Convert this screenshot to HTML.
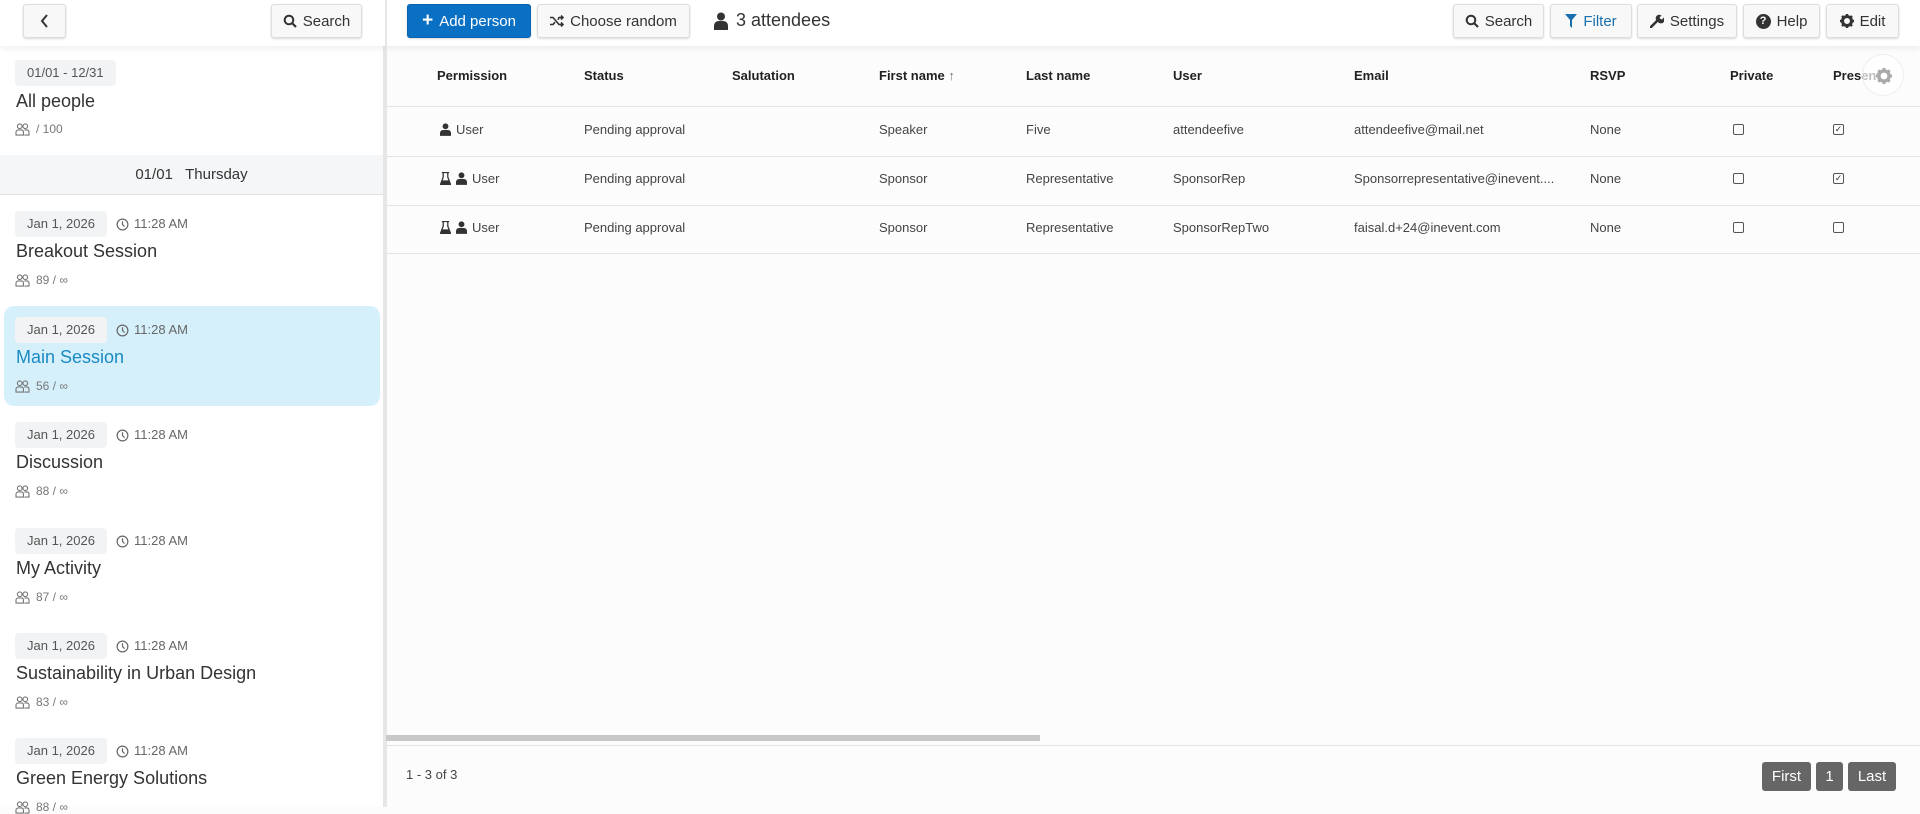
<!DOCTYPE html>
<html><head><meta charset="utf-8"><style>
*{box-sizing:border-box;margin:0;padding:0}
body{width:1920px;height:807px;overflow:hidden;background:#fcfcfc;font-family:"Liberation Sans",sans-serif;color:#333;position:relative}
.abs{position:absolute}
.btn{position:absolute;top:4px;height:34px;border:1px solid #ddd;border-radius:3px;background:#f8f8f8;box-shadow:0 1px 2px rgba(0,0,0,.15);font-size:15px;color:#333;display:flex;align-items:center;justify-content:center;gap:6px;white-space:nowrap}
.side{position:absolute;left:0;top:0;width:385px;height:807px;background:#fff;border-right:2px solid #e6e6e6}
.topbar{position:absolute;left:0;top:0;width:1920px;height:46px;background:#fff;box-shadow:0 3px 6px rgba(0,0,0,.06)}
.badge{position:absolute;left:15px;height:26px;padding:0 12px;background:#f1f3f4;border-radius:4px;font-size:13px;color:#555;line-height:26px}
.time{position:absolute;left:116px;font-size:13px;color:#666;line-height:26px;display:flex;align-items:center;gap:5px}
.title{position:absolute;left:16px;font-size:18px;color:#333}
.cnt{position:absolute;left:15px;font-size:12px;color:#777;display:flex;align-items:center;gap:6px}
.th{position:absolute;top:68px;font-size:13px;font-weight:bold;color:#222}
.td{position:absolute;font-size:13px;color:#444;display:flex;align-items:center;gap:5px}
.hl{position:absolute;left:386px;width:1534px;height:1px;background:#e3e3e3}
.cb{position:absolute;width:11px;height:11px;border:1px solid #555;border-radius:2px;font-size:9px;line-height:9px;text-align:center}
.pg{position:absolute;top:762px;height:29px;background:#666;color:#fff;border-radius:3px;font-size:15px;display:flex;align-items:center;justify-content:center}
</style></head><body>
<svg width="0" height="0" style="position:absolute">
<defs>
<symbol id="ppl" viewBox="0 0 16 14"><g fill="none" stroke="#777" stroke-width="1.2"><circle cx="5" cy="3.5" r="2.5"/><circle cx="11" cy="3.5" r="2.5"/><path d="M1 13v-3c0-1.5 1-2.5 2.5-2.5h3C8 7.5 9 8.5 9 10v3zM10 7.5h2.5c1.5 0 2.5 1 2.5 2.5v3h-5"/></g></symbol>
<symbol id="clk" viewBox="0 0 14 14"><g fill="none" stroke="#666" stroke-width="1.3"><circle cx="7" cy="7" r="5.8"/><path d="M7 3.5V7l2.2 2.2"/></g></symbol>
<symbol id="usr" viewBox="0 0 12 14"><circle cx="6" cy="3.5" r="3.2" fill="#333"/><path d="M0 14v-3c0-2 1.5-3.5 3.5-3.5h5C10.5 7.5 12 9 12 11v3z" fill="#333"/></symbol>
<symbol id="flk" viewBox="0 0 12 14"><path d="M2 0.5h8M3.5 0.5v5L0.5 13.5h11L8.5 5.5v-5" fill="none" stroke="#333" stroke-width="1.4"/><path d="M2 9h8l1.5 4.5h-11z" fill="#333"/></symbol>
</defs></svg>
<div class="side">
  <div class="badge" style="top:60px">01/01 - 12/31</div>
  <div class="title" style="top:91px">All people</div>
  <div class="cnt" style="top:122px"><svg width="15" height="13"><use href="#ppl"/></svg> / 100</div>
  <div class="abs" style="left:0;top:155px;width:383px;height:40px;background:#f5f6f7;border-bottom:1px solid #e2e2e2;text-align:center;line-height:40px;font-size:15px;color:#333">01/01&nbsp;&nbsp; Thursday</div>
  <div class="abs" style="left:4px;top:306px;width:376px;height:100px;background:#d5f0fb;border-radius:10px"></div>
  <div class="badge" style="top:211px">Jan 1, 2026</div><div class="time" style="top:211px"><svg width="13" height="13"><use href="#clk"/></svg>11:28 AM</div>
  <div class="title" style="top:241px">Breakout Session</div><div class="cnt" style="top:273px"><svg width="15" height="13"><use href="#ppl"/></svg>89 / ∞</div>
  <div class="badge" style="top:317px">Jan 1, 2026</div><div class="time" style="top:317px"><svg width="13" height="13"><use href="#clk"/></svg>11:28 AM</div>
  <div class="title" style="top:347px;color:#1a8ac4">Main Session</div><div class="cnt" style="top:379px"><svg width="15" height="13"><use href="#ppl"/></svg>56 / ∞</div>
  <div class="badge" style="top:422px">Jan 1, 2026</div><div class="time" style="top:422px"><svg width="13" height="13"><use href="#clk"/></svg>11:28 AM</div>
  <div class="title" style="top:452px">Discussion</div><div class="cnt" style="top:484px"><svg width="15" height="13"><use href="#ppl"/></svg>88 / ∞</div>
  <div class="badge" style="top:528px">Jan 1, 2026</div><div class="time" style="top:528px"><svg width="13" height="13"><use href="#clk"/></svg>11:28 AM</div>
  <div class="title" style="top:558px">My Activity</div><div class="cnt" style="top:590px"><svg width="15" height="13"><use href="#ppl"/></svg>87 / ∞</div>
  <div class="badge" style="top:633px">Jan 1, 2026</div><div class="time" style="top:633px"><svg width="13" height="13"><use href="#clk"/></svg>11:28 AM</div>
  <div class="title" style="top:663px">Sustainability in Urban Design</div><div class="cnt" style="top:695px"><svg width="15" height="13"><use href="#ppl"/></svg>83 / ∞</div>
  <div class="badge" style="top:738px">Jan 1, 2026</div><div class="time" style="top:738px"><svg width="13" height="13"><use href="#clk"/></svg>11:28 AM</div>
  <div class="title" style="top:768px">Green Energy Solutions</div><div class="cnt" style="top:800px"><svg width="15" height="13"><use href="#ppl"/></svg>88 / ∞</div>
</div>
<div class="topbar"></div>
<div class="abs" style="left:385px;top:0;width:2px;height:807px;background:#e6e6e6"></div>
<div class="btn" style="left:23px;width:43px"><svg width="10" height="14" viewBox="0 0 10 14"><path d="M7 1L2 7l5 6" fill="none" stroke="#333" stroke-width="2"/></svg></div>
<div class="btn" style="left:271px;width:91px"><svg width="14" height="14" viewBox="0 0 14 14"><circle cx="6" cy="6" r="4.3" fill="none" stroke="#333" stroke-width="2"/><path d="M9 9l4 4" stroke="#333" stroke-width="2.2"/></svg>Search</div>
<div class="btn" style="left:407px;width:124px;background:#0a70c4;border-color:#0a63ae;color:#fff"><b style="font-size:19px">+</b>Add person</div>
<div class="btn" style="left:537px;width:153px"><svg width="14" height="12" viewBox="0 0 14 12"><path d="M0 2.5h3l6 7h4M0 9.5h3l2-2.3M8 4.8l1-2.3h4M11 0.5l2 2-2 2M11 7.5l2 2-2 2" fill="none" stroke="#333" stroke-width="1.6"/></svg>Choose random</div>
<div class="abs" style="left:714px;top:10px;font-size:18px;color:#333;display:flex;align-items:center;gap:8px"><svg width="14" height="18" viewBox="0 0 14 18"><circle cx="7" cy="4.5" r="4" fill="#333"/><path d="M0 18v-4c0-3 2-5 5-5h4c3 0 5 2 5 5v4z" fill="#333"/></svg>3 attendees</div>
<div class="btn" style="left:1453px;width:91px"><svg width="14" height="14" viewBox="0 0 14 14"><circle cx="6" cy="6" r="4.3" fill="none" stroke="#333" stroke-width="2"/><path d="M9 9l4 4" stroke="#333" stroke-width="2.2"/></svg>Search</div>
<div class="btn" style="left:1550px;width:82px;color:#1a6fae"><svg width="12" height="14" viewBox="0 0 12 14"><path d="M0 0h12L7 6v8L5 12V6z" fill="#1a6fae"/></svg>Filter</div>
<div class="btn" style="left:1637px;width:100px"><svg width="14" height="14" viewBox="0 0 14 14"><path d="M1 13l6-6" stroke="#333" stroke-width="2.6" stroke-linecap="round"/><path d="M7 7a3.5 3.5 0 0 1 4.5-5.5L9.5 3.5l1 1.5 1.5 0.5 1.8-2A3.5 3.5 0 0 1 8 8z" fill="#333"/></svg>Settings</div>
<div class="btn" style="left:1743px;width:77px"><span style="display:inline-block;width:15px;height:15px;border-radius:50%;background:#333;color:#fff;font-size:11px;font-weight:bold;line-height:15px;text-align:center">?</span>Help</div>
<div class="btn" style="left:1826px;width:73px"><svg width="14" height="14" viewBox="0 0 14 14"><circle cx="7" cy="7" r="4.5" fill="none" stroke="#333" stroke-width="3"/><path d="M7 0v3M7 11v3M0 7h3M11 7h3M2 2l2 2M10 10l2 2M2 12l2-2M10 4l2-2" stroke="#333" stroke-width="2.4"/></svg>Edit</div>

<div class="th" style="left:437px">Permission</div>
<div class="th" style="left:584px">Status</div>
<div class="th" style="left:732px">Salutation</div>
<div class="th" style="left:879px">First name <span style="font-weight:normal;color:#777">↑</span></div>
<div class="th" style="left:1026px">Last name</div>
<div class="th" style="left:1173px">User</div>
<div class="th" style="left:1354px">Email</div>
<div class="th" style="left:1590px">RSVP</div>
<div class="th" style="left:1730px">Private</div>
<div class="th" style="left:1833px">Present</div>
<div class="abs" style="left:1862px;top:54px;width:42px;height:42px;border-radius:50%;background:rgba(255,255,255,.7);border:1px solid #eee"><svg style="position:absolute;left:13px;top:13px" width="16" height="16" viewBox="0 0 14 14"><circle cx="7" cy="7" r="4.5" fill="none" stroke="#aaa" stroke-width="3"/><path d="M7 0v3M7 11v3M0 7h3M11 7h3M2 2l2 2M10 10l2 2M2 12l2-2M10 4l2-2" stroke="#aaa" stroke-width="2.4"/></svg></div>
<div class="hl" style="top:106px"></div><div class="hl" style="top:156px"></div><div class="hl" style="top:205px"></div><div class="hl" style="top:253px"></div>

<div class="td" style="left:440px;top:122px"><svg width="11" height="13"><use href="#usr"/></svg>User</div>
<div class="td" style="left:584px;top:122px">Pending approval</div>
<div class="td" style="left:879px;top:122px">Speaker</div>
<div class="td" style="left:1026px;top:122px">Five</div>
<div class="td" style="left:1173px;top:122px">attendeefive</div>
<div class="td" style="left:1354px;top:122px">attendeefive@mail.net</div>
<div class="td" style="left:1590px;top:122px">None</div>
<div class="cb" style="left:1733px;top:124px"></div><div class="cb" style="left:1833px;top:124px">✓</div>

<div class="td" style="left:440px;top:171px"><svg width="11" height="13"><use href="#flk"/></svg><svg width="11" height="13"><use href="#usr"/></svg>User</div>
<div class="td" style="left:584px;top:171px">Pending approval</div>
<div class="td" style="left:879px;top:171px">Sponsor</div>
<div class="td" style="left:1026px;top:171px">Representative</div>
<div class="td" style="left:1173px;top:171px">SponsorRep</div>
<div class="td" style="left:1354px;top:171px">Sponsorrepresentative@inevent....</div>
<div class="td" style="left:1590px;top:171px">None</div>
<div class="cb" style="left:1733px;top:173px"></div><div class="cb" style="left:1833px;top:173px">✓</div>

<div class="td" style="left:440px;top:220px"><svg width="11" height="13"><use href="#flk"/></svg><svg width="11" height="13"><use href="#usr"/></svg>User</div>
<div class="td" style="left:584px;top:220px">Pending approval</div>
<div class="td" style="left:879px;top:220px">Sponsor</div>
<div class="td" style="left:1026px;top:220px">Representative</div>
<div class="td" style="left:1173px;top:220px">SponsorRepTwo</div>
<div class="td" style="left:1354px;top:220px">faisal.d+24@inevent.com</div>
<div class="td" style="left:1590px;top:220px">None</div>
<div class="cb" style="left:1733px;top:222px"></div><div class="cb" style="left:1833px;top:222px"></div>

<div class="abs" style="left:386px;top:735px;width:654px;height:6px;background:#c8c8c8"></div>
<div class="hl" style="top:745px"></div>
<div class="abs" style="left:406px;top:767px;font-size:13px;color:#444">1 - 3 of 3</div>
<div class="pg" style="left:1762px;width:49px">First</div>
<div class="pg" style="left:1816px;width:27px">1</div>
<div class="pg" style="left:1848px;width:48px">Last</div>
</body></html>
